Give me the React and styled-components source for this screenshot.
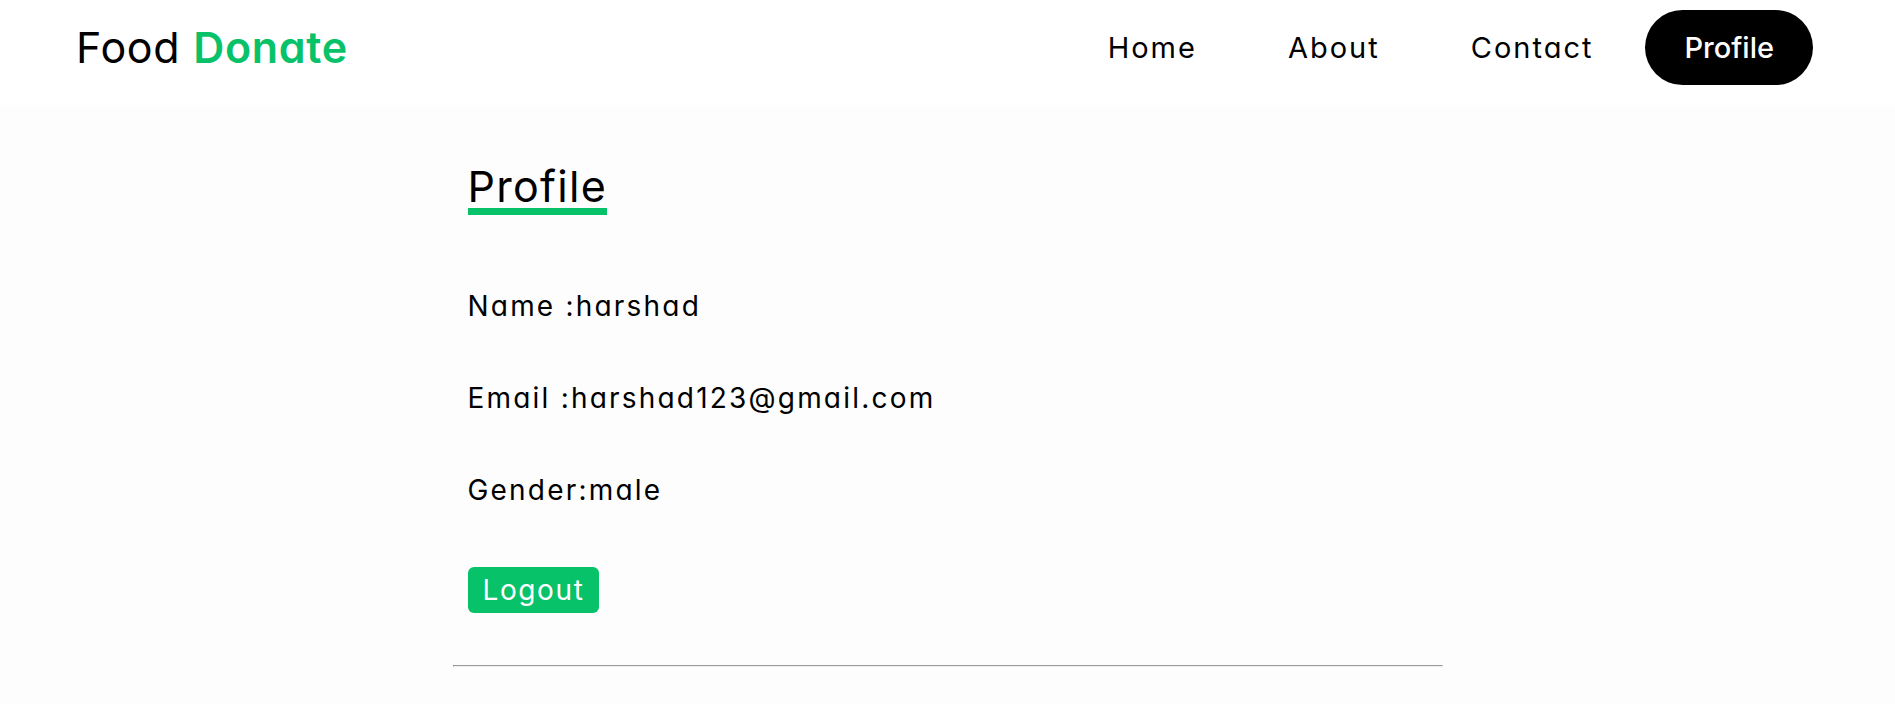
import React from "react";
import styled, { createGlobalStyle } from "styled-components";

const theme = {
  green: "#08c26a",
  black: "#000000",
  white: "#ffffff",
  page: "#fdfdfd",
  font: "Inter, 'Noto Sans', sans-serif"
};

const GlobalStyle = createGlobalStyle`
  html, body, #root {
    margin: 0;
    padding: 0;
  }

  body {
    background: ${theme.page};
    font-family: ${theme.font};
    font-feature-settings: "cv11";
    color: ${theme.black};
  }
`;

const Header = styled.header`
  display: flex;
  justify-content: space-between;
  align-items: center;
  height: 95px;
  padding: 0 82px 10px 76px;
  background: ${theme.white};
`;

const Logo = styled.div`
  font-size: 43px;
  line-height: 1;
  letter-spacing: 0.7px;

  span {
    color: ${theme.green};
    font-weight: 600;
  }
`;

const Nav = styled.nav`
  display: flex;
  align-items: center;
  gap: 13px;
`;

const NavLink = styled.a`
  display: block;
  padding: 15px 39px;
  font-size: 29px;
  line-height: 45px;
  text-decoration: none;
  border-radius: 40px;
  letter-spacing: ${(p) => (p.$active ? "0" : "2px")};
  color: ${(p) => (p.$active ? theme.white : theme.black)};
  background: ${(p) => (p.$active ? theme.black : "transparent")};
  font-weight: ${(p) => (p.$active ? 500 : 400)};
`;

const Main = styled.main`
  width: 990px;
  margin: 0 auto;
`;

const Card = styled.section`
  padding: 60px 15px 0;
`;

const Title = styled.h2`
  display: inline-block;
  margin: 0 0 71px;
  font-size: 43px;
  font-weight: 400;
  line-height: 1;
  letter-spacing: 1.3px;
  border-bottom: 7px solid ${theme.green};
`;

const Field = styled.p`
  margin: 0 0 ${(p) => (p.$last ? 0 : "52px")};
  font-size: 28px;
  line-height: 40px;
  letter-spacing: 2.2px;
`;

const LogoutButton = styled.button`
  display: block;
  margin: 57px 0 0;
  padding: 0 15px;
  height: 46px;
  font-family: ${theme.font};
  font-feature-settings: "cv11";
  font-size: 28px;
  line-height: 46px;
  letter-spacing: 1.6px;
  color: ${theme.white};
  background: ${theme.green};
  border: none;
  border-radius: 6px;
`;

const Divider = styled.hr`
  margin: 52px 0 0;
`;

const navItems = ["Home", "About", "Contact", "Profile"];

export default function App() {
  return (
    <>
      <GlobalStyle />
      <Header>
        <Logo>
          Food <span>Donate</span>
        </Logo>
        <Nav>
          {navItems.map((item) => (
            <NavLink key={item} href="#" $active={item === "Profile"}>
              {item}
            </NavLink>
          ))}
        </Nav>
      </Header>
      <Main>
        <Card>
          <Title>Profile</Title>
          <Field>Name :harshad</Field>
          <Field>Email :harshad123@gmail.com</Field>
          <Field $last>Gender:male</Field>
          <LogoutButton>Logout</LogoutButton>
        </Card>
        <Divider />
      </Main>
    </>
  );
}
